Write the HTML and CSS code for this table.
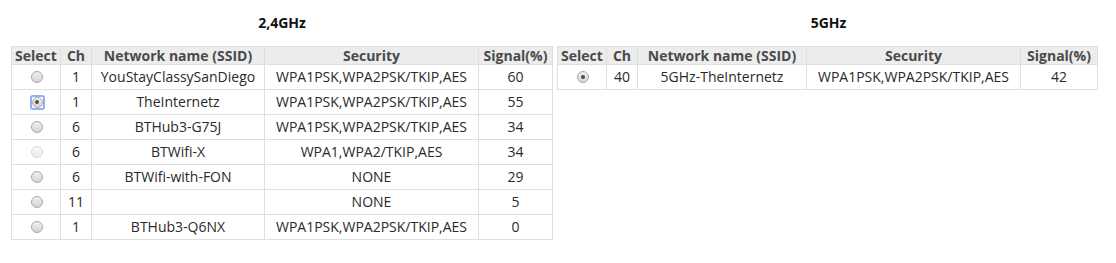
FILE: index.html
```html
<!DOCTYPE html>
<html>
<head>
<meta charset="utf-8">
<link rel="stylesheet" href="styles.css">
</head>
<body>
<div class="bands">
  <section class="band band-left">
    <h3 class="title">2,4GHz</h3>
    <table class="net">
      <colgroup><col class="c-sel"><col class="c-ch"><col class="c-ssid"><col class="c-sec"><col class="c-sig"></colgroup>
      <thead>
        <tr><th>Select</th><th>Ch</th><th>Network name (SSID)</th><th>Security</th><th>Signal(%)</th></tr>
      </thead>
      <tbody>
        <tr><td><span class="radio"></span></td><td>1</td><td>YouStayClassySanDiego</td><td>WPA1PSK,WPA2PSK/TKIP,AES</td><td>60</td></tr>
        <tr><td><span class="focus"><span class="radio checked"></span></span></td><td>1</td><td>TheInternetz</td><td>WPA1PSK,WPA2PSK/TKIP,AES</td><td>55</td></tr>
        <tr><td><span class="radio"></span></td><td>6</td><td>BTHub3-G75J</td><td>WPA1PSK,WPA2PSK/TKIP,AES</td><td>34</td></tr>
        <tr><td><span class="radio disabled"></span></td><td>6</td><td>BTWifi-X</td><td>WPA1,WPA2/TKIP,AES</td><td>34</td></tr>
        <tr><td><span class="radio"></span></td><td>6</td><td>BTWifi-with-FON</td><td>NONE</td><td>29</td></tr>
        <tr><td><span class="radio"></span></td><td>11</td><td></td><td>NONE</td><td>5</td></tr>
        <tr><td><span class="radio"></span></td><td>1</td><td>BTHub3-Q6NX</td><td>WPA1PSK,WPA2PSK/TKIP,AES</td><td>0</td></tr>
      </tbody>
    </table>
  </section>
  <section class="band band-right">
    <h3 class="title">5GHz</h3>
    <table class="net net-right">
      <colgroup><col class="c-sel"><col class="c-ch"><col class="c-ssid5"><col class="c-sec"><col class="c-sig5"></colgroup>
      <thead>
        <tr><th>Select</th><th>Ch</th><th>Network name (SSID)</th><th>Security</th><th>Signal(%)</th></tr>
      </thead>
      <tbody>
        <tr><td><span class="radio checked"></span></td><td>40</td><td>5GHz-TheInternetz</td><td>WPA1PSK,WPA2PSK/TKIP,AES</td><td>42</td></tr>
      </tbody>
    </table>
  </section>
</div>
</body>
</html>
```

FILE: styles.css
```css
html, body {
  margin: 0;
  padding: 0;
  background: #ffffff;
}
body {
  font-family: "Open Sans", "Liberation Sans", sans-serif;
  font-size: 14px;
  color: #333333;
}
.bands {
  display: flex;
  gap: 5px;
  padding: 14px 0 0 11px;
}
.band {
  display: flex;
  flex-direction: column;
}
.band-left { width: 541px; }
.band-right { width: 540px; }
.title {
  margin: 0 0 14px 0;
  font-size: 14px;
  font-weight: bold;
  line-height: 18px;
  text-align: center;
  color: #111111;
}
.band-left .title { padding-left: 1px; }
.band-right .title { padding-left: 3px; }
.net {
  border-collapse: collapse;
  table-layout: fixed;
  width: 541px;
}
.net-right { width: 540px; }
.c-sel { width: 49px; }
.c-ch { width: 31px; }
.c-ssid { width: 173px; }
.c-ssid5 { width: 169px; }
.c-sec { width: 214px; }
.c-sig { width: 74px; }
.c-sig5 { width: 77px; }
.net th, .net td {
  border: 1px solid #dfdfdf;
  padding: 0;
  text-align: center;
  vertical-align: middle;
  white-space: nowrap;
  overflow: hidden;
}
.net th {
  height: 17px;
  line-height: 17px;
  background: #ececec;
  color: #4a4a4a;
  font-weight: bold;
}
.net td {
  height: 24px;
  line-height: 18px;
  color: #2a2a2a;
}
.radio {
  display: inline-block;
  box-sizing: border-box;
  width: 12px;
  height: 12px;
  margin-left: 2px;
  border-radius: 50%;
  border: 1px solid #a9a9a9;
  background: linear-gradient(#f0f0f0, #d4d4d4);
  vertical-align: middle;
  position: relative;
  top: -1px;
}
.radio.disabled {
  border-color: #d8d8d8;
  background: linear-gradient(#f8f8f8, #ececec);
}
.radio.checked::after {
  content: "";
  position: absolute;
  left: 3px;
  top: 3px;
  width: 4px;
  height: 4px;
  border-radius: 50%;
  background: #505050;
}
.focus {
  display: inline-flex;
  align-items: center;
  justify-content: center;
  box-sizing: border-box;
  width: 15px;
  height: 15px;
  margin-left: 2px;
  border: 2px solid #8db0f2;
  border-radius: 3px;
  vertical-align: middle;
  position: relative;
  top: -1px;
}
.focus .radio {
  margin-left: 0;
  top: 0;
  width: 11px;
  height: 11px;
}
.focus .radio.checked::after {
  left: 2.5px;
  top: 2.5px;
}
```
